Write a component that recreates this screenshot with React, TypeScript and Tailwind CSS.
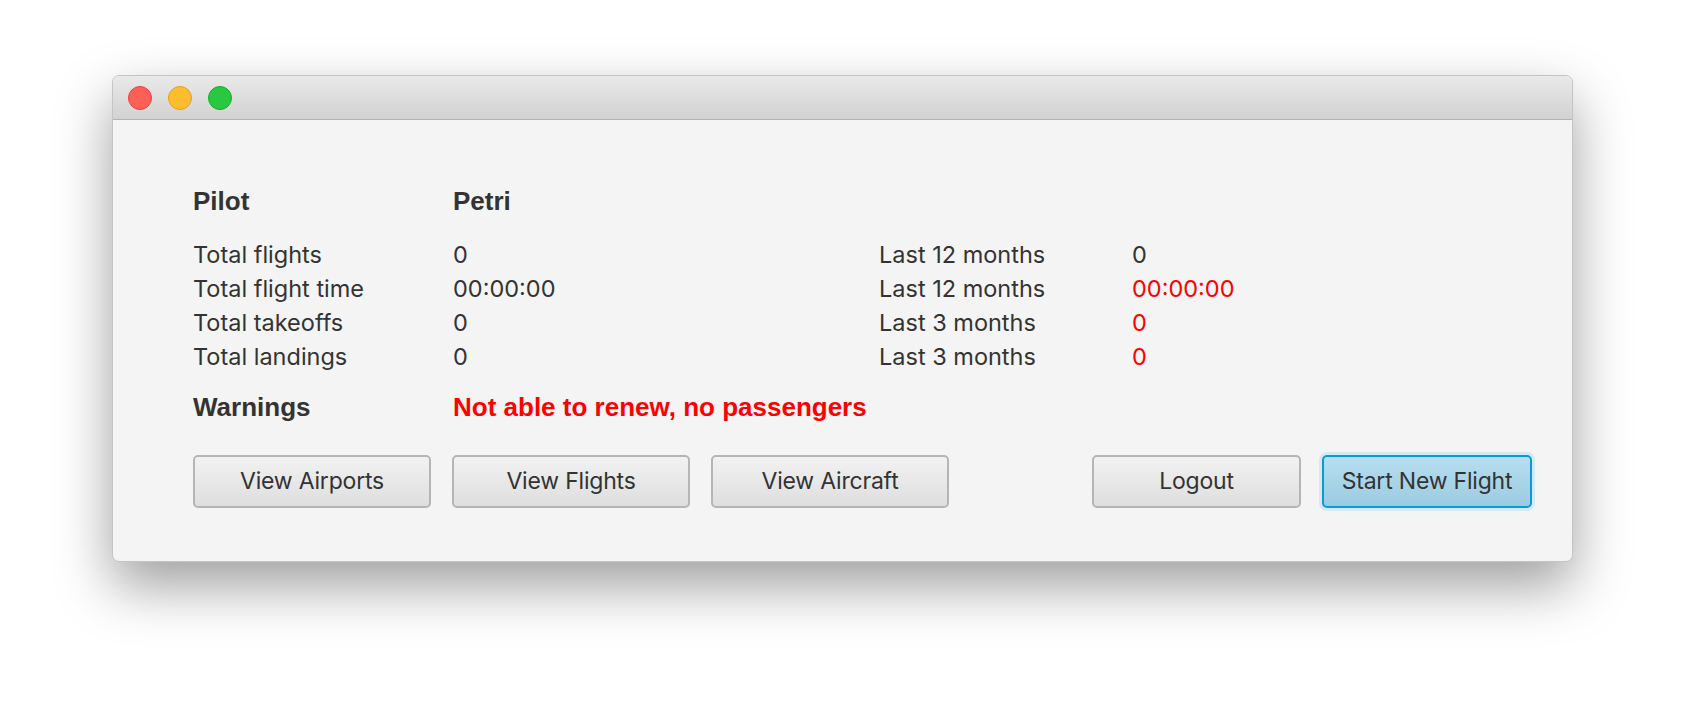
import React from "react";

const stats = [
  { label: "Total flights", value: "0", recent: "Last 12 months", recentValue: "0", warn: false },
  { label: "Total flight time", value: "00:00:00", recent: "Last 12 months", recentValue: "00:00:00", warn: true },
  { label: "Total takeoffs", value: "0", recent: "Last 3 months", recentValue: "0", warn: true },
  { label: "Total landings", value: "0", recent: "Last 3 months", recentValue: "0", warn: true },
];

const bold = "font-['Liberation_Sans',Arial,sans-serif] font-bold text-[26px]";
const body = "font-['Inter',sans-serif] text-[23.5px]";

const Button = ({ label, width, primary }: { label: string; width: string; primary?: boolean }) => (
  <button
    className={`${width} h-[53px] rounded-[5px] font-['Inter',sans-serif] text-[23px] tracking-[-0.2px] text-[#333] ${
      primary
        ? "border-2 border-[#0a9bd6] bg-gradient-to-b from-[#b6def0] to-[#9ccbe1] shadow-[0_0_0_3px_rgba(120,200,235,0.25)]"
        : "border-2 border-[#b5b5b5] bg-gradient-to-b from-[#f2f2f2] to-[#dedede]"
    }`}
  >
    {label}
  </button>
);

export default function App() {
  return (
    <div className="min-h-[710px] w-[1684px] bg-white pl-[112px] pt-[75px]">
      <div className="w-[1461px] h-[487px] overflow-hidden rounded-[7px] border border-[#c4c4c4] bg-[#f4f4f4] shadow-[0_24px_55px_rgba(0,0,0,0.38)]">
        <div className="flex h-[44px] items-center gap-[16px] border-b border-[#b3b3b3] bg-gradient-to-b from-[#e9e9e9] to-[#d2d2d2] pl-[15px]">
          <span className="h-[24px] w-[24px] rounded-full border border-[#e0443e] bg-[#fe5f57]" />
          <span className="h-[24px] w-[24px] rounded-full border border-[#dea123] bg-[#febc2e]" />
          <span className="h-[24px] w-[24px] rounded-full border border-[#1aab29] bg-[#28c840]" />
        </div>

        <div className="pl-[80px] pr-[40px] pt-[64px] text-[#333]">
          <div className={`flex leading-[34px] ${bold}`}>
            <span className="w-[260px]">Pilot</span>
            <span>Petri</span>
          </div>

          <div className="mt-[20px] grid grid-cols-[260px_426px_253px_1fr] leading-[34px]">
            {stats.map((s) => (
              <React.Fragment key={s.label}>
                <span className={body}>{s.label}</span>
                <span className={body}>{s.value}</span>
                <span className={body}>{s.recent}</span>
                <span className={`${body} ${s.warn ? "text-[#ff0000]" : ""}`}>{s.recentValue}</span>
              </React.Fragment>
            ))}
          </div>

          <div className={`mt-[16px] flex leading-[34px] ${bold}`}>
            <span className="w-[260px]">Warnings</span>
            <span className="text-[#ff0000]">Not able to renew, no passengers</span>
          </div>

          <div className="mt-[31px] flex items-center">
            <div className="flex gap-[21px]">
              <Button label="View Airports" width="w-[238px]" />
              <Button label="View Flights" width="w-[238px]" />
              <Button label="View Aircraft" width="w-[238px]" />
            </div>
            <div className="ml-auto flex gap-[21px]">
              <Button label="Logout" width="w-[209px]" />
              <Button label="Start New Flight" width="w-[210px]" primary />
            </div>
          </div>
        </div>
      </div>
    </div>
  );
}
